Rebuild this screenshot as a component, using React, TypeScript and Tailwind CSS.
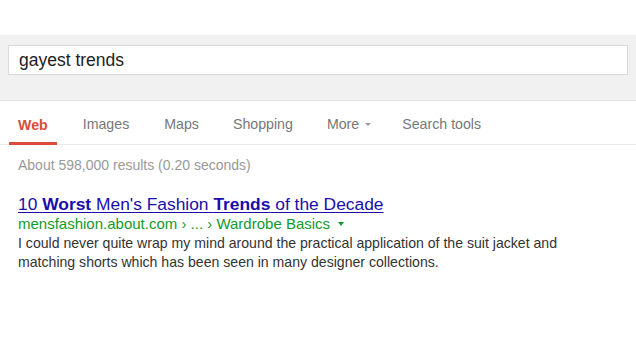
import React from "react";

export default function App() {
  const font = { fontFamily: '"Liberation Sans", Arial, sans-serif' };
  return (
    <div className="w-[636px] h-[358px] bg-white overflow-hidden" style={font}>
      <div className="h-[35px]" />
      <div className="bg-[#f1f1f1] h-[66px] pt-[10px] pl-[8px] pr-[8px] border-b border-[#e5e5e5]">
        <div className="h-[30px] bg-white border border-[#d9d9d9] flex items-center pl-[10px] text-[17.5px] text-[#222]">
          gayest trends
        </div>
      </div>
      <div className="flex items-end h-[44px] border-b border-[#ebebeb] pl-[9px] text-[14.2px] text-[#777]">
        <div className="px-[9px] pb-[6px] border-b-[3px] border-[#dd4b39] text-[#dd4b39] font-bold mb-[-1px]">Web</div>
        <div className="ml-[26px] pb-[9px]">Images</div>
        <div className="ml-[35px] pb-[9px]">Maps</div>
        <div className="ml-[34px] pb-[9px]">Shopping</div>
        <div className="ml-[34px] pb-[9px] flex items-center">
          More
          <span className="ml-[6px] inline-block w-0 h-0 border-l-[3px] border-r-[3px] border-t-[3px] border-l-transparent border-r-transparent border-t-[#999]" />
        </div>
        <div className="ml-[31px] pb-[9px]">Search tools</div>
      </div>
      <div className="pl-[18px]">
        <div className="mt-[10px] text-[14px] text-[#999]">About 598,000 results (0.20 seconds)</div>
        <div className="mt-[18px] text-[17.4px] text-[#1a0dab] underline underline-offset-[2px] leading-[21px] w-fit">
          10 <b>Worst</b> Men's Fashion <b>Trends</b> of the Decade
        </div>
        <div className="text-[15px] text-[#119a2c] leading-[18px] flex items-center">
          mensfashion.about.com › ... › Wardrobe Basics
          <span className="ml-[8px] inline-block w-0 h-0 border-l-[3px] border-r-[3px] border-t-[4px] border-l-transparent border-r-transparent border-t-[#119a2c]" />
        </div>
        <div className="text-[14.1px] text-[#333] leading-[19px] mt-[1px]">
          I could never quite wrap my mind around the practical application of the suit jacket and
          <br />
          matching shorts which has been seen in many designer collections.
        </div>
      </div>
    </div>
  );
}
